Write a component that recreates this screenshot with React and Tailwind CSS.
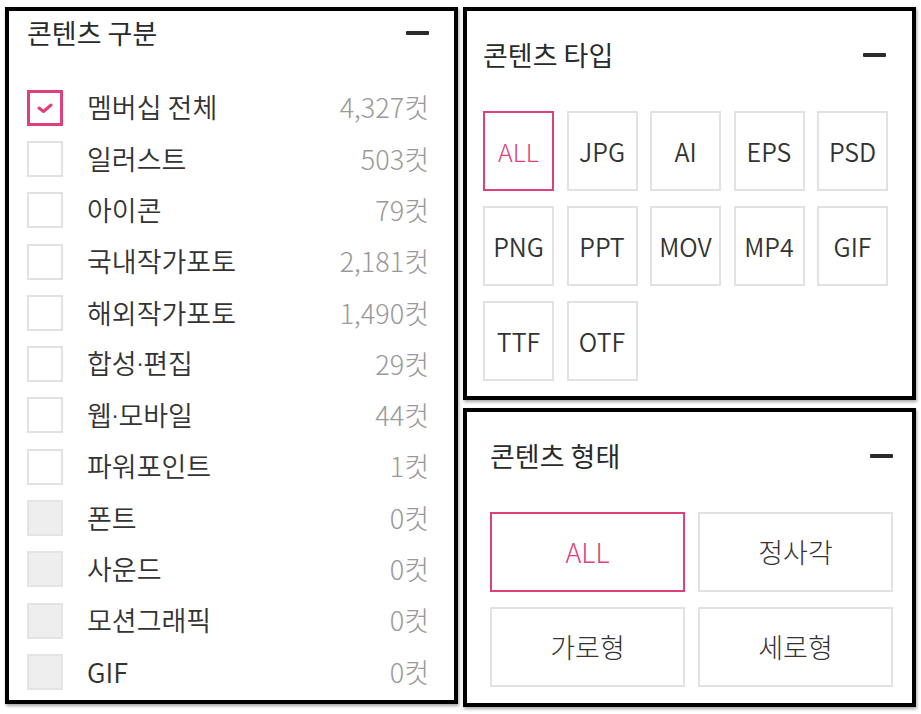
import React from 'react';

const categories = [
    { label: '멤버십 전체', count: '4,327컷', checked: true },
    { label: '일러스트', count: '503컷' },
    { label: '아이콘', count: '79컷' },
    { label: '국내작가포토', count: '2,181컷' },
    { label: '해외작가포토', count: '1,490컷' },
    { label: '합성·편집', count: '29컷' },
    { label: '웹·모바일', count: '44컷' },
    { label: '파워포인트', count: '1컷' },
    { label: '폰트', count: '0컷', disabled: true },
    { label: '사운드', count: '0컷', disabled: true },
    { label: '모션그래픽', count: '0컷', disabled: true },
    { label: 'GIF', count: '0컷', disabled: true },
];

const fileTypes = ['ALL', 'JPG', 'AI', 'EPS', 'PSD', 'PNG', 'PPT', 'MOV', 'MP4', 'GIF', 'TTF', 'OTF'];
const shapes = ['ALL', '정사각', '가로형', '세로형'];

// collapse bar on the right of each heading
const Minus = () => <span className="block w-[23px] h-[4px] bg-[#2b2b2b] rounded-[1px]" />;

const PanelTitle = ({ text }) => (
    <div className="flex items-center justify-between">
        <h2 className="text-[27px] leading-[36px] font-normal text-[#2a2a2a]">{text}</h2>
        <Minus />
    </div>
);

// the CJK font draws a full-width middle dot, the reference has a narrow one
const Label = ({ text }) => {
    const parts = text.split('·');
    if (parts.length === 1) return text;
    return (
        <>
            {parts[0]}
            <span className="font-['Noto_Sans']">·</span>
            {parts[1]}
        </>
    );
};

const Checkbox = ({ checked, disabled }) => {
    if (checked) {
        return (
            <div className="w-[36px] h-[36px] border-[3px] border-[#e0407a] flex items-center justify-center">
                <svg width="16" height="12" viewBox="0 0 16 12" fill="none">
                    <path d="M2 6 L6.5 9.5 L14 3" stroke="#e0407a" strokeWidth="3" strokeLinecap="round" strokeLinejoin="round" />
                </svg>
            </div>
        );
    }
    return (
        <div
            className={
                disabled
                    ? 'w-[36px] h-[36px] border-2 border-[#e4e4e4] bg-[#eeeeee]'
                    : 'w-[36px] h-[36px] border-2 border-[#e2e2e2] bg-white'
            }
        />
    );
};

const App = () => {
    return (
        <div
            className="w-[921px] h-[714px] bg-white flex gap-[5px] pl-[5px] pt-[7px]"
            style={{ fontFamily: '"Noto Sans CJK KR", "Noto Sans", sans-serif' }}
        >
            {/* 콘텐츠 구분 */}
            <div className="w-[453px] h-[697px] border-4 border-black bg-white shadow-[1px_2px_3px_rgba(0,0,0,0.35)] pl-[18px] pr-[25px] pt-[4px]">
                <PanelTitle text="콘텐츠 구분" />
                <div className="mt-[31px] flex flex-col">
                    {categories.map((c) => (
                        <div key={c.label} className="h-[51.3px] flex items-center">
                            <Checkbox checked={c.checked} disabled={c.disabled} />
                            <span className="ml-[24px] text-[27px] text-[#333] font-[350]">
                                <Label text={c.label} />
                            </span>
                            <span className="ml-auto text-[27px] text-[#999] font-light">{c.count}</span>
                        </div>
                    ))}
                </div>
            </div>

            <div className="flex flex-col gap-[8px]">
                {/* 콘텐츠 타입 */}
                <div className="w-[453px] h-[393px] border-4 border-black bg-white shadow-[1px_2px_3px_rgba(0,0,0,0.35)] pl-[16px] pr-[26px] pt-[26px]">
                    <PanelTitle text="콘텐츠 타입" />
                    <div className="mt-[38px] grid grid-cols-[repeat(5,71px)] gap-x-[12.5px] gap-y-[15px]">
                        {fileTypes.map((t, i) => (
                            <div
                                key={t}
                                className={
                                    i === 0
                                        ? 'h-[80px] pt-[2px] border-2 border-[#e0407a] text-[#e0407a] flex items-center justify-center text-[25px] font-light'
                                        : 'h-[80px] pt-[2px] border-2 border-[#e2e2e2] text-[#333] flex items-center justify-center text-[25px] font-[350]'
                                }
                            >
                                {t}
                            </div>
                        ))}
                    </div>
                </div>

                {/* 콘텐츠 형태 */}
                <div className="w-[453px] h-[299px] border-4 border-black bg-white shadow-[1px_2px_3px_rgba(0,0,0,0.35)] pl-[23px] pr-[19px] pt-[26px]">
                    <PanelTitle text="콘텐츠 형태" />
                    <div className="mt-[38px] grid grid-cols-2 gap-x-[13px] gap-y-[15px]">
                        {shapes.map((s, i) => (
                            <div
                                key={s}
                                className={
                                    i === 0
                                        ? 'h-[80px] border-2 border-[#e0407a] text-[#e0407a] flex items-center justify-center text-[27px] font-light'
                                        : 'h-[80px] border-2 border-[#e2e2e2] text-[#333] flex items-center justify-center text-[27px] font-light'
                                }
                            >
                                {s}
                            </div>
                        ))}
                    </div>
                </div>
            </div>
        </div>
    );
};

export default App;
